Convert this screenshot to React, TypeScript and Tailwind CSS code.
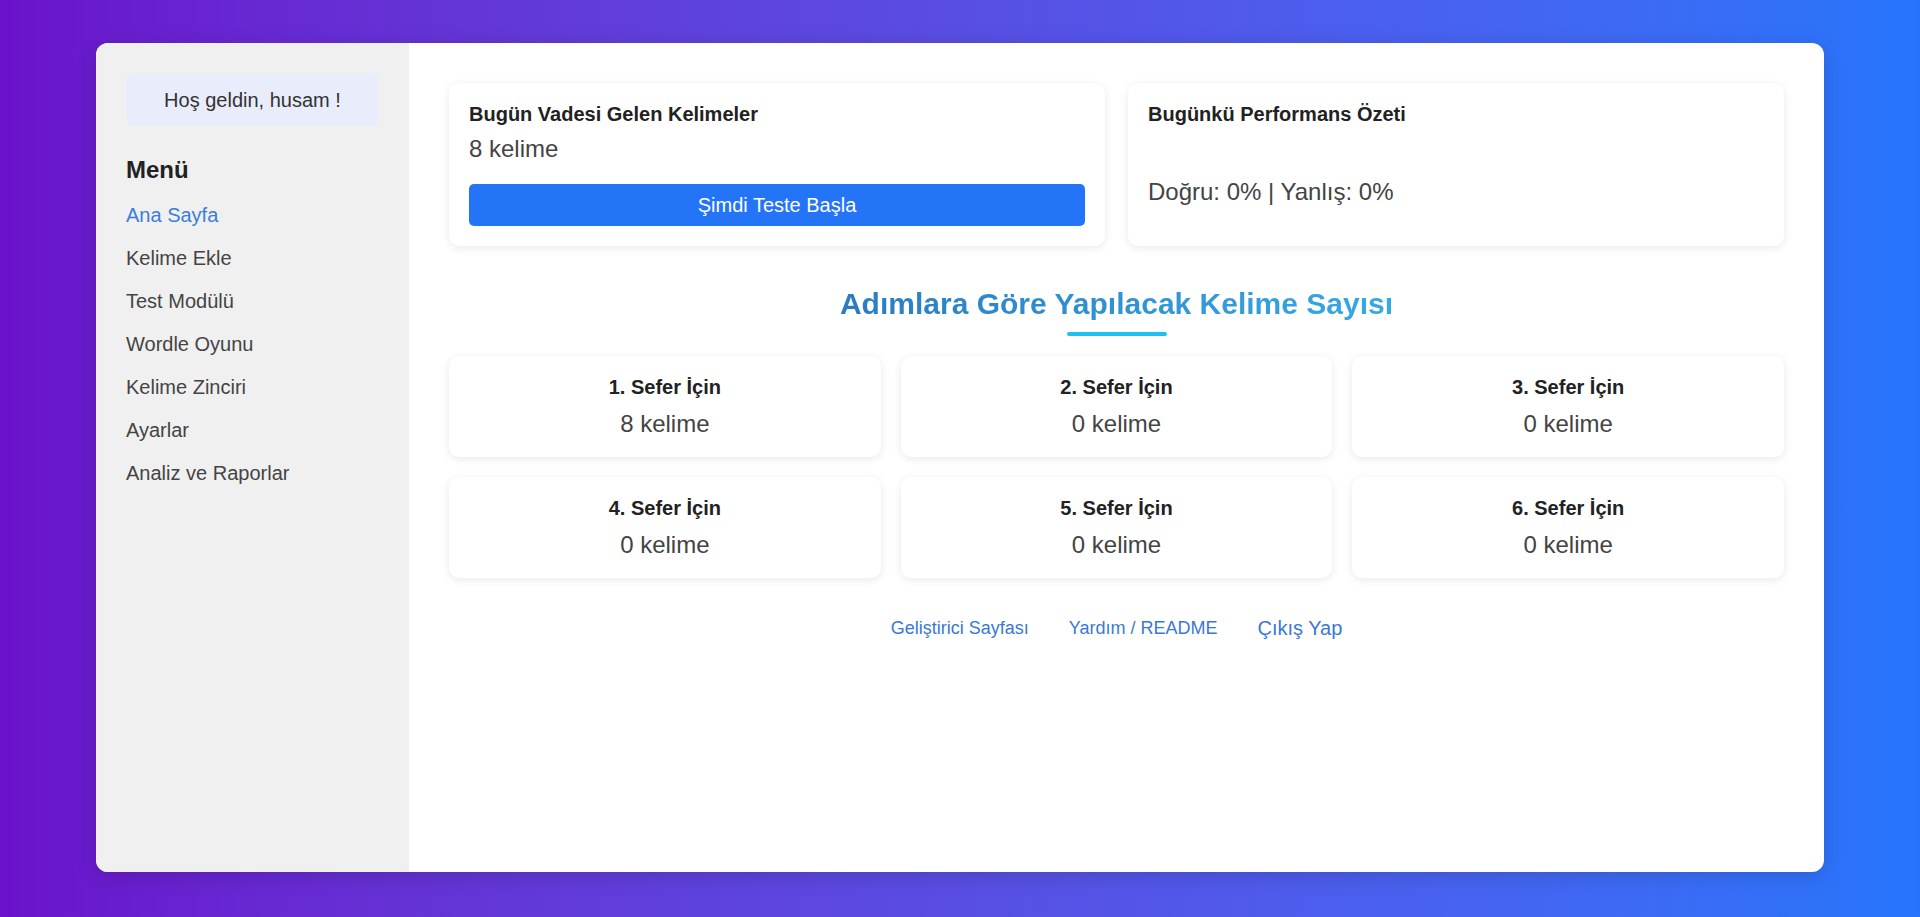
const menuItems = [
  "Ana Sayfa",
  "Kelime Ekle",
  "Test Modülü",
  "Wordle Oyunu",
  "Kelime Zinciri",
  "Ayarlar",
  "Analiz ve Raporlar",
];

const steps = [
  { step: 1, count: 8 },
  { step: 2, count: 0 },
  { step: 3, count: 0 },
  { step: 4, count: 0 },
  { step: 5, count: 0 },
  { step: 6, count: 0 },
];

function Sidebar() {
  return (
    <aside className="w-[313px] shrink-0 bg-[#f0f0f0] p-[30px]">
      <div className="flex h-[53px] items-center justify-center rounded-[8px] bg-[#e8ecfb] text-[20px] text-[#333]">
        Hoş geldin, husam !
      </div>
      <h3 className="mt-[30px] text-[24px] font-bold leading-[28px] text-[#222]">Menü</h3>
      <ul className="mt-[9px]">
        {menuItems.map((item, i) => (
          <li
            key={item}
            className={`flex h-[43px] items-center text-[20px] ${
              i === 0 ? "text-[#3b7ddd]" : "text-[#444]"
            }`}
          >
            {item}
          </li>
        ))}
      </ul>
    </aside>
  );
}

function StepCard({ step, count }: { step: number; count: number }) {
  return (
    <div className="h-[101px] rounded-[10px] bg-white py-[19px] text-center shadow-[0_2px_8px_rgba(0,0,0,0.09)]">
      <div className="text-[20px] font-bold leading-[24px] text-[#222]">{step}. Sefer İçin</div>
      <div className="mt-[11px] text-[24px] leading-[28px] text-[#444]">{count} kelime</div>
    </div>
  );
}

export default function App() {
  return (
    <div
      className="min-h-screen bg-gradient-to-r from-[#6a11cb] to-[#2575fc] px-[96px] pt-[43px] pb-[45px]"
      style={{ fontFamily: '"Liberation Sans", Arial, sans-serif' }}
    >
      <div className="flex h-[829px] overflow-hidden rounded-[12px] bg-white shadow-[0_4px_20px_rgba(0,0,0,0.15)]">
        <Sidebar />

        <main className="flex-1 p-[40px]">
          <div className="grid grid-cols-2 gap-[23px]">
            <div className="h-[163px] rounded-[10px] bg-white p-5 shadow-[0_2px_8px_rgba(0,0,0,0.09)]">
              <div className="text-[20px] font-bold leading-[22px] text-[#222]">
                Bugün Vadesi Gelen Kelimeler
              </div>
              <div className="mt-[10px] text-[24px] leading-[28px] text-[#444]">8 kelime</div>
              <button className="mt-[21px] flex h-[42px] w-full items-center justify-center rounded-[5px] bg-[#2374f7] text-[20px] text-white">
                Şimdi Teste Başla
              </button>
            </div>
            <div className="h-[163px] rounded-[10px] bg-white p-5 shadow-[0_2px_8px_rgba(0,0,0,0.09)]">
              <div className="text-[20px] font-bold leading-[22px] text-[#222]">
                Bugünkü Performans Özeti
              </div>
              <div className="mt-[53px] text-[24px] leading-[28px] text-[#444]">
                Doğru: 0% | Yanlış: 0%
              </div>
            </div>
          </div>

          <h2 className="mt-[40px] text-center text-[30px] font-bold leading-[36px]">
            <span className="bg-gradient-to-r from-[#2a7cc0] to-[#36a9e6] bg-clip-text text-transparent">
              Adımlara Göre Yapılacak Kelime Sayısı
            </span>
          </h2>
          <div className="mx-auto mt-[10px] h-[4px] w-[100px] rounded-full bg-[#1ec0f0]" />

          <div className="mt-[20px] grid grid-cols-3 gap-5">
            {steps.map((s) => (
              <StepCard key={s.step} step={s.step} count={s.count} />
            ))}
          </div>

          <div className="mt-[38px] flex items-center justify-center gap-10 leading-[24px] text-[#3a78d8]">
            <a className="text-[18px]">Geliştirici Sayfası</a>
            <a className="text-[18px]">Yardım / README</a>
            <a className="text-[20px]">Çıkış Yap</a>
          </div>
        </main>
      </div>
    </div>
  );
}
